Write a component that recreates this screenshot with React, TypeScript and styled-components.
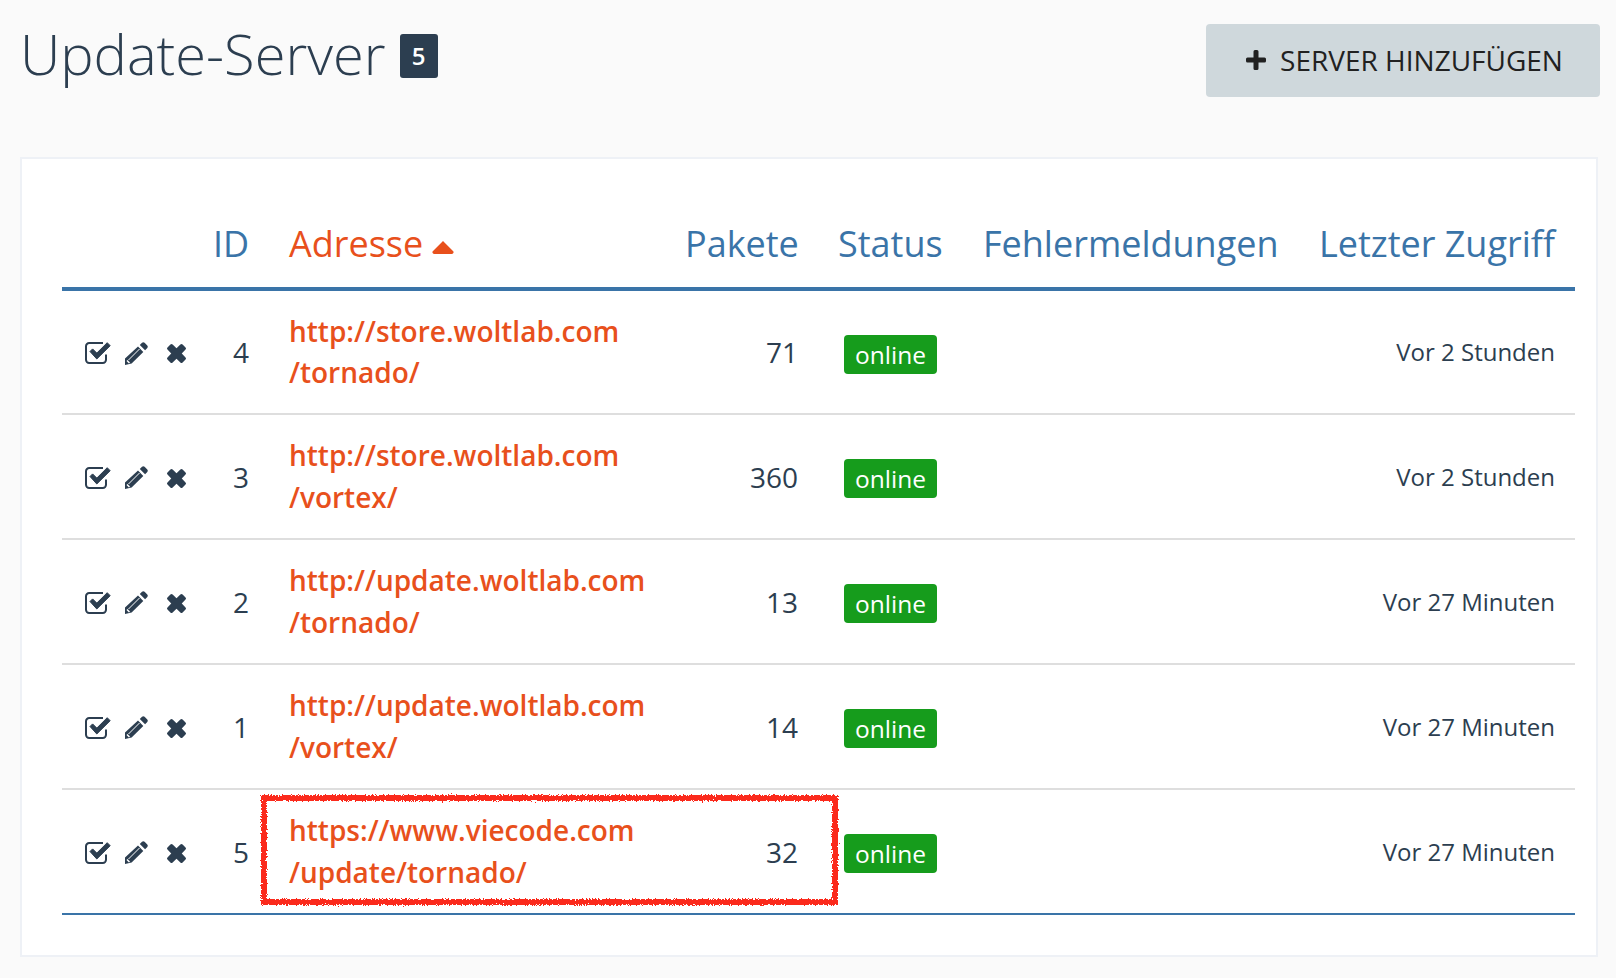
import React from "react";
import styled, { createGlobalStyle } from "styled-components";

const Global = createGlobalStyle`
  html, body { margin: 0; padding: 0; background: #fafafa; }
  body { font-family: "Open Sans", "Liberation Sans", sans-serif; color: #2c3e50; }
`;

const Page = styled.div`
  width: 1616px;
  height: 978px;
  box-sizing: border-box;
  padding: 24px 16px 0 20px;
  overflow: hidden;
`;

const Header = styled.header`
  display: flex;
  justify-content: space-between;
  align-items: flex-start;
`;

const TitleWrap = styled.div`
  display: flex;
  align-items: center;
  gap: 14px;
  height: 60px;
`;

const Title = styled.h1`
  margin: -2px 0 0;
  font-size: 56px;
  font-weight: 300;
  line-height: 60px;
  color: #2c3e50;
`;

const Count = styled.span`
  display: flex;
  align-items: center;
  justify-content: center;
  width: 38px;
  height: 44px;
  margin-top: 3px;
  border-radius: 3px;
  background: #2c3e50;
  color: #fff;
  font-size: 24px;
  font-weight: 600;
`;

const AddButton = styled.button`
  display: flex;
  align-items: center;
  justify-content: center;
  gap: 13px;
  width: 394px;
  height: 73px;
  padding: 0 0 2px 2px;
  border: 0;
  border-radius: 4px;
  background: #cfd8dc;
  color: #212121;
  font-family: inherit;
  font-size: 28px;
  font-weight: 400;
`;

const Card = styled.section`
  position: relative;
  box-sizing: border-box;
  width: 1578px;
  height: 800px;
  margin-top: 60px;
  padding: 34px 40px 0 40px;
  background: #fff;
  border: 2px solid #eef1f6;
`;

const Table = styled.table`
  table-layout: fixed;
  width: 1513px;
  border-collapse: collapse;
`;

const Th = styled.th<{ $align?: string; $active?: boolean }>`
  height: 96px;
  box-sizing: border-box;
  padding: 0 20px 18px;
  vertical-align: bottom;
  border-bottom: 4px solid #3a74a8;
  text-align: ${(p) => p.$align || "left"};
  font-size: 36px;
  font-weight: 400;
  line-height: 50px;
  white-space: nowrap;
  color: ${(p) => (p.$active ? "#e8501c" : "#3a74a8")};
`;

const Row = styled.tr<{ $last?: boolean }>`
  height: 125px;
  border-bottom: 2px solid ${(p) => (p.$last ? "#3a74a8" : "#dedede")};
`;

const Td = styled.td<{ $align?: string; $size?: number }>`
  padding: 0 20px;
  text-align: ${(p) => p.$align || "left"};
  font-size: ${(p) => p.$size || 28}px;
  line-height: 40px;
  color: #2c3e50;
  white-space: nowrap;
`;

const IconCell = styled.td`
  padding: 0 0 0 20px;
`;

const IconRow = styled.div`
  display: flex;
  align-items: center;
  gap: 12px;
  padding-left: 3px;
  margin-top: 2px;
  svg { flex: none; }
`;

const CrossWrap = styled.span`
  display: flex;
  margin: 1px 0 0 5px;
`;

const Address = styled.a`
  display: block;
  color: #e8501c;
  font-size: 28px;
  font-weight: 600;
  line-height: 41.5px;
  text-decoration: none;
`;

const Badge = styled.span`
  display: inline-block;
  margin: 4px 0 0 6px;
  padding: 0 11px;
  height: 39px;
  line-height: 40px;
  border-radius: 4px;
  background: #169c1c;
  color: #fff;
  font-size: 24.5px;
`;

const Caret = styled.svg`
  display: inline-block;
  margin-left: 9px;
  vertical-align: 3px;
`;

const Annotation = styled.svg`
  position: absolute;
  left: 236px;
  top: 633px;
  pointer-events: none;
`;

const CheckIcon = () => (
  <svg width="27" height="24" viewBox="0 0 27 24" fill="none">
    <path d="M21 13.5v5.3a3.2 3.2 0 0 1-3.2 3.2H4.2A3.2 3.2 0 0 1 1 18.8V5.2A3.2 3.2 0 0 1 4.2 2H18" stroke="#2c3e50" strokeWidth="2" />
    <path d="M5 10.5l2.6-2.6 4.2 4.2L22.2 1.7l3 3L11.800 18z" fill="#2c3e50" stroke="#2c3e50" strokeLinejoin="round" />
  </svg>
);

const PencilIcon = () => (
  <svg width="25" height="25" viewBox="0 0 25 25">
    <path d="M18 1.7a2 2 0 0 1 2.6 0l2.7 2.7a2 2 0 0 1 0 2.6l-2.2 2.2-5.3-5.3zM14 5.6l5.3 5.3L7.6 22.6 1 24v-6.600z" fill="#2c3e50" />
    <path d="M15.500 8L4.500 19" stroke="#fff" strokeWidth="1" />
    <path d="M3 19.500l2.500 2.500" stroke="#fff" strokeWidth="1.500" />
  </svg>
);

const CrossIcon = () => (
  <svg width="21" height="21" viewBox="0 0 20 20">
    <path d="M10 5l3.700-3.600a1.500 1.500 0 0 1 2.100 0l2.800 2.800a1.500 1.500 0 0 1 0 2.100L15 10l3.600 3.700a1.500 1.500 0 0 1 0 2.100l-2.800 2.800a1.500 1.500 0 0 1-2.100 0L10 15l-3.700 3.600a1.500 1.500 0 0 1-2.100 0l-2.800-2.800a1.500 1.500 0 0 1 0-2.100L5 10 1.400 6.300a1.500 1.500 0 0 1 0-2.100l2.800-2.800a1.500 1.500 0 0 1 2.100 0z" fill="#2c3e50" />
  </svg>
);

const PlusIcon = () => (
  <svg width="22" height="22" viewBox="0 0 22 22">
    <path d="M8.500 2.500A1.500 1.500 0 0 1 10 1h2a1.500 1.500 0 0 1 1.500 1.500v6h6A1.500 1.500 0 0 1 21 10v2a1.500 1.500 0 0 1-1.500 1.500h-6v6A1.500 1.500 0 0 1 12 21h-2a1.500 1.500 0 0 1-1.500-1.500v-6h-6A1.500 1.500 0 0 1 1 12v-2a1.500 1.500 0 0 1 1.500-1.500h6z" fill="#212121" />
  </svg>
);

const rows = [
  { id: 4, a: "http://store.woltlab.com", b: "/tornado/", p: 71, t: "Vor 2 Stunden" },
  { id: 3, a: "http://store.woltlab.com", b: "/vortex/", p: 360, t: "Vor 2 Stunden" },
  { id: 2, a: "http://update.woltlab.com", b: "/tornado/", p: 13, t: "Vor 27 Minuten" },
  { id: 1, a: "http://update.woltlab.com", b: "/vortex/", p: 14, t: "Vor 27 Minuten" },
  { id: 5, a: "https://www.viecode.com", b: "/update/tornado/", p: 32, t: "Vor 27 Minuten" },
];

export default function App() {
  return (
    <Page>
      <Global />
      <Header>
        <TitleWrap>
          <Title>Update-Server</Title>
          <Count>5</Count>
        </TitleWrap>
        <AddButton>
          <PlusIcon />
          SERVER HINZUFÜGEN
        </AddButton>
      </Header>
      <Card>
        <Table>
          <colgroup>
            <col width="131" />
            <col width="76" />
            <col width="396" />
            <col width="153" />
            <col width="145" />
            <col width="335" />
            <col width="277" />
          </colgroup>
          <thead>
            <tr>
              <Th />
              <Th $align="right">ID</Th>
              <Th $active>
                Adresse
                <Caret width="22" height="13" viewBox="0 0 22 13">
                  <path d="M11 0l10 10a1.700 1.700 0 0 1-1 3H2a1.700 1.700 0 0 1-1-3z" fill="#e8501c" />
                </Caret>
              </Th>
              <Th $align="right">Pakete</Th>
              <Th>Status</Th>
              <Th>Fehlermeldungen</Th>
              <Th $align="right">Letzter Zugriff</Th>
            </tr>
          </thead>
          <tbody>
            {rows.map((r, i) => (
              <Row key={r.id} $last={i === rows.length - 1}>
                <IconCell>
                  <IconRow>
                    <CheckIcon />
                    <PencilIcon />
                    <CrossWrap>
                      <CrossIcon />
                    </CrossWrap>
                  </IconRow>
                </IconCell>
                <Td $align="right">{r.id}</Td>
                <Td>
                  <Address href="#">{r.a}</Address>
                  <Address href="#">{r.b}</Address>
                </Td>
                <Td $align="right">{r.p}</Td>
                <Td>
                  <Badge>online</Badge>
                </Td>
                <Td />
                <Td $align="right" $size={24}>{r.t}</Td>
              </Row>
            ))}
          </tbody>
        </Table>
        <Annotation width="590" height="122" viewBox="0 0 590 122">
          <defs>
            <filter id="rough" x="-2%" y="-10%" width="104%" height="120%">
              <feTurbulence type="fractalNoise" baseFrequency="0.7" numOctaves="2" seed="4" />
              <feDisplacementMap in="SourceGraphic" scale="5" />
            </filter>
          </defs>
          <rect x="6" y="6" width="571" height="104" fill="none" stroke="#fb2c1a" strokeWidth="6" filter="url(#rough)" />
        </Annotation>
      </Card>
    </Page>
  );
}
